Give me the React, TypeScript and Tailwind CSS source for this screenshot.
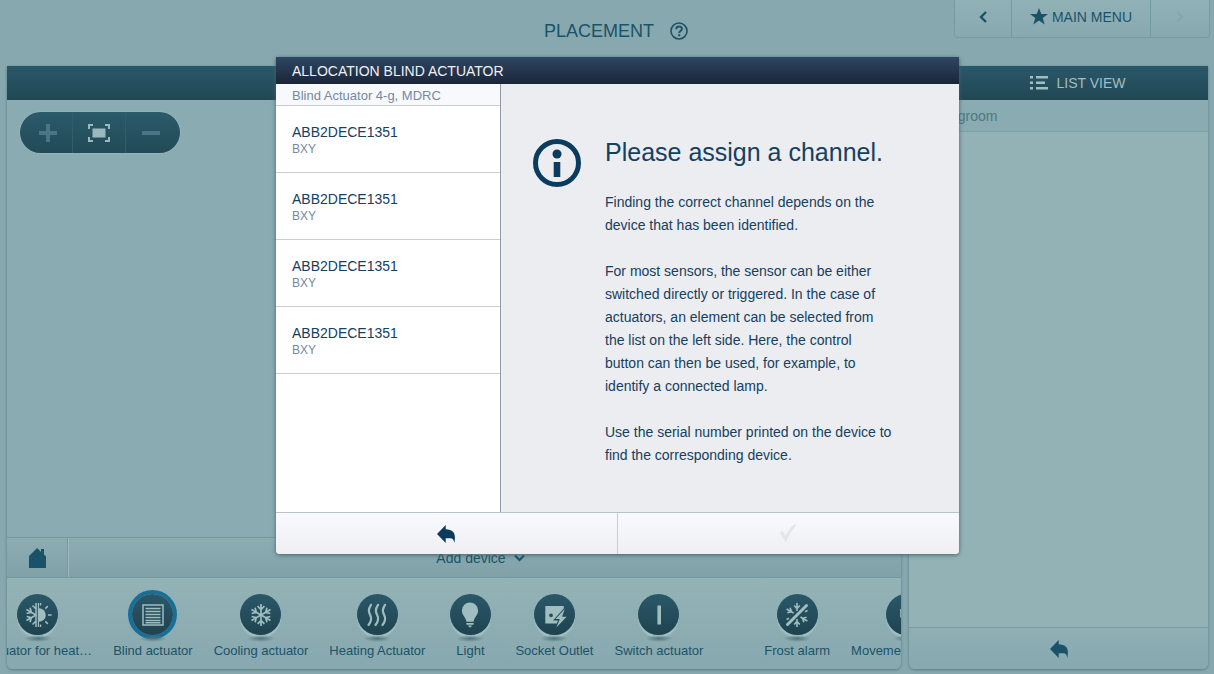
import React from "react";

type Device = { label: string; icon: React.ReactNode; selected?: boolean; separated?: boolean };

function BackArrow() {
  return (
    <svg width="18" height="18" viewBox="0 0 18 18" fill="currentColor" aria-hidden="true">
      <path d="M0 9 8.700 0v4.200c6.500.2 9.500 3.300 9.200 8.800l-.4 5c-.8-3.200-1.800-4.800-4-4.800H8.700V18z" />
    </svg>
  );
}

function HouseIcon() {
  return (
    <svg width="17" height="20" viewBox="0 0 17 20" fill="currentColor" aria-hidden="true">
      <path d="M0 8 8.200 0 12 4V1h3v5.600l2 2V20H0z" />
    </svg>
  );
}

function SnowArms({ angles }: { angles: number[] }) {
  return (
    <g fill="none" stroke="currentColor" strokeWidth="1.700">
      {angles.map((angle) => (
        <path key={angle} d="M12 12V1M8.600 3.200 12 6.600l3.400-3.400" transform={`rotate(${angle} 12 12)`} />
      ))}
    </g>
  );
}

function DeviceSvg({ children }: { children: React.ReactNode }) {
  return (
    <svg width="24" height="24" viewBox="0 0 24 24" fill="currentColor" className="overflow-visible" aria-hidden="true">
      {children}
    </svg>
  );
}

const heatCoolIcon = (
  <DeviceSvg>
    <g transform="translate(-2 0)">
      <SnowArms angles={[240, 300]} />
    </g>
    <g fill="none" stroke="currentColor" strokeWidth="1.500">
      <path d="M10 0v24M6.500 2.500 10 6M6.500 21.500 10 18" />
      <path d="M12.400 0v24" strokeWidth="1.200" />
      <path d="M14.500 0v2.600M14.500 21.400V24M19.300 5.600l2.500-2.500M22 12h3.600M19.300 18.400l2.500 2.500" />
    </g>
    <path d="M13 5.200a6.800 6.800 0 0 1 0 13.600z" />
  </DeviceSvg>
);

const blindIcon = (
  <DeviceSvg>
    <path d="M2 2h20v20H2z" fill="none" stroke="currentColor" strokeWidth="1.500" />
    <path d="M4.500 5.500h15M4.500 8.500h15M4.500 11.500h15M4.500 14.500h15M4.500 17.500h15M4.500 19.800h15" stroke="currentColor" strokeWidth="1.500" />
  </DeviceSvg>
);

const snowIcon = (
  <DeviceSvg>
    <SnowArms angles={[0, 60, 120, 180, 240, 300]} />
  </DeviceSvg>
);

const heatingIcon = (
  <DeviceSvg>
    <g fill="none" stroke="currentColor" strokeWidth="2.200" strokeLinecap="round">
      <path d="M6 1.800C3 6.500 3.600 8.800 5.200 12s1.500 6-1.700 10" />
      <path d="M13 1.800c-3 4.700-2.400 7-.8 10.200s1.500 6-1.700 10" />
      <path d="M20 1.800c-3 4.700-2.400 7-.8 10.200s1.500 6-1.700 10" />
    </g>
  </DeviceSvg>
);

const bulbIcon = (
  <svg width="18" height="26" viewBox="0 0 20 28" fill="currentColor" aria-hidden="true">
    <path d="M10 0a9 9 0 0 0-9 9C1 14.500 5.500 16.500 6 21.500h8c.5-5 5-7 5-12.500a9 9 0 0 0-9-9z" />
    <path d="M6 23h8v1.800H6zM7.800 25.800h4.400L11 27.500H9z" />
  </svg>
);

const socketIcon = (
  <DeviceSvg>
    <path
      d="M3.300 3h18.500v2.400L11 17.500h5l-1.200 2.900H3.300zM9 10.400a1.900 1.900 0 1 0 0 3.800 1.900 1.900 0 0 0 0-3.800z"
      fillRule="evenodd"
    />
    <path d="m22.800 6-9.300 10h4.300l-3.400 8.500 10.200-10.700H20z" />
  </DeviceSvg>
);

const switchIcon = (
  <DeviceSvg>
    <path d="M10.400 2.500H14v19h-3.600z" />
  </DeviceSvg>
);

const frostIcon = (
  <DeviceSvg>
    <g fill="none" stroke="currentColor" strokeWidth="1.600">
      {[0, 180, 300, 120].map((angle) => (
        <path key={angle} d="M12 8V0M9.200 2.500 12 5.500l2.800-3" transform={`rotate(${angle} 12 12)`} />
      ))}
      <path d="M1.500 16.500 4 15.300M20 8.700l2.500-1.200" />
    </g>
    <path d="M2.500 21.500 21.500 2.500" stroke="currentColor" strokeWidth="3" strokeLinecap="round" />
  </DeviceSvg>
);

const personIcon = (
  <svg width="14" height="24" viewBox="0 0 16 28" fill="currentColor" aria-hidden="true">
    <circle cx="8" cy="3" r="3" />
    <path d="M0 7h16v10h-2.500V10h-.8v17H9v-9H7v9H3.300V10h-.8v7H0z" />
  </svg>
);

const devices: Device[] = [
  { label: "Actuator for heat…", icon: heatCoolIcon },
  { label: "Blind actuator", icon: blindIcon, selected: true },
  { label: "Cooling actuator", icon: snowIcon },
  { label: "Heating Actuator", icon: heatingIcon },
  { label: "Light", icon: bulbIcon },
  { label: "Socket Outlet", icon: socketIcon },
  { label: "Switch actuator", icon: switchIcon },
  { label: "Frost alarm", icon: frostIcon, separated: true },
  { label: "Movement detector", icon: personIcon },
];

const channels = [1, 2, 3, 4].map((id) => ({ id, name: "ABB2DECE1351", place: "BXY" }));

function Header() {
  return (
    <header className="grid h-[66px] grid-cols-[1fr_auto_1fr] items-start pr-1">
      <div />
      <div className="flex items-center gap-4 pt-[19px] pl-[22px]">
        <h1 className="text-[18px] leading-6">PLACEMENT</h1>
        <button type="button" aria-label="Help">
          <svg width="18" height="18" viewBox="0 0 18 18" fill="none" stroke="currentColor" aria-hidden="true">
            <circle cx="9" cy="9" r="8" strokeWidth="1.600" />
            <path d="M6.200 7.200c0-3.600 5.700-3.500 5.700-.3 0 2-2.700 2-2.700 4" strokeWidth="1.900" />
            <path d="M8.200 12.200h2v2h-2z" fill="currentColor" stroke="none" />
          </svg>
        </button>
      </div>
      <nav className="flex h-[38px] justify-self-end rounded-b-sm border border-t-0 border-[#759ba2] bg-linear-to-b from-[#90b1b6] to-[#89a9b1]">
        <button type="button" aria-label="Back" className="flex w-14 items-center justify-center pb-1">
          <svg width="8" height="12" viewBox="0 0 8 12" fill="none" stroke="currentColor" strokeWidth="2.400" aria-hidden="true">
            <path d="M7 1 2 6l5 5" />
          </svg>
        </button>
        <button type="button" className="flex w-[140px] items-center justify-center gap-1 border-x border-[#759ba2] pb-1 text-[14px] leading-5">
          <svg width="18" height="17" viewBox="0 0 18 17" fill="currentColor" aria-hidden="true">
            <path d="m9 0 2.300 6H18l-5.300 4 2 6.600L9 12.600l-5.700 4 2-6.600L0 6h6.700z" />
          </svg>
          MAIN MENU
        </button>
        <button type="button" aria-label="Forward" disabled className="flex w-[58px] items-center justify-center pb-1 text-[#85a7ad]">
          <svg width="8" height="12" viewBox="0 0 8 12" fill="none" stroke="currentColor" strokeWidth="2.400" aria-hidden="true">
            <path d="m1 1 5 5-5 5" />
          </svg>
        </button>
      </nav>
    </header>
  );
}

function ZoomControls() {
  return (
    <div className="flex h-[41px] w-40 overflow-hidden rounded-full bg-linear-to-b from-[#2b5a6b] to-[#224a56] shadow-[0_0_2px_#a3c3c7]">
      <button type="button" aria-label="Zoom in" className="flex w-[52px] items-center justify-center pl-1 text-[#487687]">
        <svg width="18" height="18" viewBox="0 0 18 18" stroke="currentColor" strokeWidth="4" aria-hidden="true">
          <path d="M9 0v18M0 9h18" />
        </svg>
      </button>
      <button type="button" aria-label="Fit to screen" className="flex w-[54px] items-center justify-center border-x border-[#315e6c] text-[#9bb9bc]">
        <svg width="22" height="18" viewBox="0 0 22 18" aria-hidden="true">
          <path d="M4.500 4.500h13v9h-13z" fill="currentColor" />
          <path d="M1 5V1h4M17 1h4v4M21 13v4h-4M5 17H1v-4" fill="none" stroke="currentColor" strokeWidth="2" />
        </svg>
      </button>
      <button type="button" aria-label="Zoom out" className="flex w-[54px] items-center justify-center pr-1 text-[#487687]">
        <svg width="18" height="18" viewBox="0 0 18 18" stroke="currentColor" strokeWidth="4" aria-hidden="true">
          <path d="M0 9h18" />
        </svg>
      </button>
    </div>
  );
}

function DeviceButton({ device }: { device: Device }) {
  return (
    <button
      type="button"
      className={`flex min-w-12 shrink-0 flex-col items-center ${device.separated ? "ml-10" : ""}`}
    >
      <span className="flex flex-col items-center">
        <span
          className={`flex size-[41px] items-center justify-center rounded-full bg-linear-to-b from-[#2a5869] to-[#1f434f] text-[#a0bdc0] ${
            device.selected ? "ring-4 ring-[#176f98]" : "shadow-[0_3px_1px_#a1bfc2]"
          }`}
        >
          {device.icon}
        </span>
        <span className="h-[7px] w-7 rounded-full bg-radial from-[#4f757c] to-transparent to-70%" />
      </span>
      <span className="text-[13px] leading-[18px] whitespace-nowrap">{device.label}</span>
    </button>
  );
}

function PlanPanel() {
  return (
    <section className="flex min-w-0 flex-1 flex-col overflow-hidden rounded-b-md bg-[#8aabb1] shadow-[0_1px_3px_#55797f]">
      <div className="h-[34px] bg-linear-to-b from-[#2a5869] to-[#214753]" />
      <div className="flex-1 px-[13px] pt-3">
        <ZoomControls />
      </div>
      <div className="flex h-[41px] border-y border-[#749aa1] bg-linear-to-b from-[#8dadb3] to-[#7fa1a7]">
        <button type="button" aria-label="Home" className="flex w-[61px] items-center justify-center border-r border-[#749aa1] shadow-[1px_0_0_#9ebcc0]">
          <HouseIcon />
        </button>
        <button type="button" className="flex flex-1 items-center justify-center gap-2 pr-2 text-[14px] leading-5">
          Add device
          <svg width="11" height="8" viewBox="0 0 11 8" fill="none" stroke="currentColor" strokeWidth="2.200" aria-hidden="true">
            <path d="m1 1.500 4.500 4.500L10 1.500" />
          </svg>
        </button>
      </div>
      <div className="h-[91px] overflow-hidden bg-linear-to-b from-[#93b3b6] to-[#87a8af] pt-4">
        <div className="-ml-6 flex gap-[21px]">
          {devices.map((device) => (
            <DeviceButton key={device.label} device={device} />
          ))}
        </div>
      </div>
    </section>
  );
}

function ListPanel() {
  return (
    <section className="flex w-[299px] shrink-0 flex-col overflow-hidden rounded-b-md bg-[#92b2b5] shadow-[0_1px_3px_#55797f]">
      <button type="button" className="flex h-[34px] items-center justify-center gap-2 bg-linear-to-b from-[#2a5869] to-[#214753] pl-[38px] text-[14px] leading-5 text-[#a1bec1]">
        <svg width="19" height="14" viewBox="0 0 19 14" fill="currentColor" aria-hidden="true">
          <path d="M0 0h3v2.500H0zM0 5.500h3V8H0zM0 11h3v2.500H0zM6 0h12v2.500H6zM6 5.500h9V8H6zM6 11h12v2.500H6z" />
        </svg>
        LIST VIEW
      </button>
      <div className="flex h-8 items-center border-b border-[#7da0a7] bg-[#8aabb1] px-5 text-[14px] leading-5 text-[#4b7886]">
        Livingroom
      </div>
      <div className="flex-1" />
      <button type="button" aria-label="Back to list" className="flex h-[42px] items-center justify-center border-t border-[#759ba2] bg-linear-to-b from-[#8fafb5] to-[#87a8af]">
        <BackArrow />
      </button>
    </section>
  );
}

function AllocationDialog() {
  return (
    <div className="absolute inset-x-0 top-0 flex justify-center pt-[57px] pl-[21px]">
      <div
        role="dialog"
        aria-modal="true"
        aria-labelledby="allocation-title"
        className="w-full max-w-[683px] overflow-hidden rounded-b-sm bg-[#ebedf1] text-[#15405f] shadow-[0_1px_4px_#3f646b]"
      >
        <h2 id="allocation-title" className="bg-linear-to-b from-[#2e4763] to-[#1b2538] px-4 pt-1 pb-[2px] text-[14px] leading-[21px] text-[#eef1f5]">
          ALLOCATION BLIND ACTUATOR
        </h2>
        <div className="flex min-h-[428px]">
          <div className="w-[225px] shrink-0 border-r border-[#8f9aa4] bg-white">
            <p className="border-b border-[#cbced1] bg-[#f8f9fd] px-4 pt-[3px] text-[13px] leading-[18px] text-[#7588a3]">
              Blind Actuator 4-g, MDRC
            </p>
            <ul>
              {channels.map((channel) => (
                <li key={channel.id}>
                  <button type="button" className="flex h-[67px] w-full flex-col items-start justify-center border-b border-[#cbced1] px-4 pt-[2px] text-left">
                    <span className="text-[14px] leading-[18px]">{channel.name}</span>
                    <span className="text-[12px] leading-4 text-[#7588a3]">{channel.place}</span>
                  </button>
                </li>
              ))}
            </ul>
          </div>
          <div className="flex flex-1 items-start gap-6 pt-[53px] pr-[67px] pl-8">
            <svg width="48" height="48" viewBox="0 0 48 48" className="mt-[2px] shrink-0" fill="#0b3c5d" aria-hidden="true">
              <circle cx="24" cy="24" r="21.500" fill="none" stroke="#0b3c5d" strokeWidth="5" />
              <circle cx="24" cy="15" r="4.500" />
              <path d="M20.700 23h6.600v15h-6.600z" />
            </svg>
            <div className="flex flex-col gap-[23px] text-[14px] leading-[23px]">
              <h3 className="text-[25px] leading-[31px]">Please assign a channel.</h3>
              <p>Finding the correct channel depends on the device that has been identified.</p>
              <p>
                For most sensors, the sensor can be either switched directly or triggered. In the case of actuators, an
                element can be selected from the list on the left side. Here, the control button can then be used, for
                example, to identify a connected lamp.
              </p>
              <p>Use the serial number printed on the device to find the corresponding device.</p>
            </div>
          </div>
        </div>
        <div className="grid h-[42px] grid-cols-2 border-t border-[#b9c3cb] bg-linear-to-b from-[#f9fafe] to-[#eeeef3]">
          <button type="button" aria-label="Go back" className="flex items-center justify-center border-r border-[#c5cdd3] text-[#0b3c5d]">
            <BackArrow />
          </button>
          <button type="button" aria-label="Confirm" disabled className="flex items-center justify-center text-[#e2e5e9]">
            <svg width="17" height="19" viewBox="0 0 17 19" fill="currentColor" aria-hidden="true">
              <path d="M0 9 2.500 7l3.300 4.600C8 6.500 11 2.500 15 0l1 1.800C11.500 6 8.500 11.500 6.200 18.500z" />
            </svg>
          </button>
        </div>
      </div>
    </div>
  );
}

export default function App() {
  return (
    <div className="relative flex min-h-screen flex-col overflow-hidden bg-[#87a8af] font-['Liberation_Sans',Arial,sans-serif] text-[#1a5368]">
      <Header />
      <main className="flex flex-1 gap-2 pr-[6px] pb-[5px] pl-[7px]">
        <PlanPanel />
        <ListPanel />
      </main>
      <AllocationDialog />
    </div>
  );
}
